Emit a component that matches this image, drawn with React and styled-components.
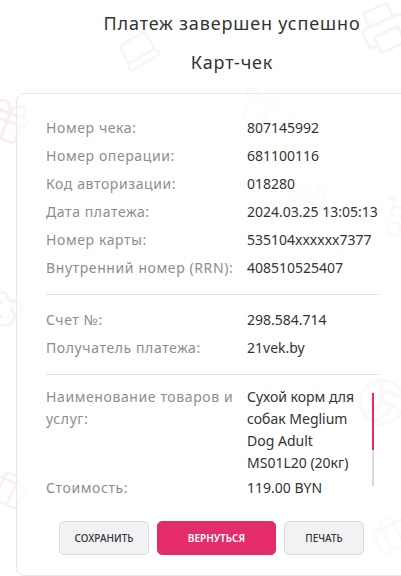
import styled, { createGlobalStyle } from "styled-components";
import { Laptop, Printer, Volleyball, Bike, Gift, Dog, Briefcase, Shirt } from "lucide-react";

const GlobalStyle = createGlobalStyle`
    html, body {
        margin: 0;
        padding: 0;
        background: #fff;
        overflow: hidden;
    }
    body {
        font-family: "Noto Sans", "Open Sans", sans-serif;
        color: #333;
    }
`;

const receipt = [
    { label: "Номер чека:", value: "807145992" },
    { label: "Номер операции:", value: "681100116" },
    { label: "Код авторизации:", value: "018280" },
    { label: "Дата платежа:", value: "2024.03.25 13:05:13" },
    { label: "Номер карты:", value: "535104xxxxxx7377" },
    { label: "Внутренний номер (RRN):", value: "408510525407" },
];

const payee = [
    { label: "Счет №:", value: "298.584.714" },
    { label: "Получатель платежа:", value: "21vek.by" },
];

const marks = [
    { Icon: Laptop, x: 116, y: 28, size: 44, rot: -30, color: "#f6f6f6" },
    { Icon: Printer, x: 358, y: 2, size: 52, rot: -25, color: "#f5f5f5" },
    { Icon: Gift, x: -18, y: 96, size: 50, rot: 20, color: "#f9edf3" },
    { Icon: Bike, x: 374, y: 190, size: 46, rot: -40, color: "#f9f1f5" },
    { Icon: Dog, x: -16, y: 290, size: 40, rot: 30, color: "#f9eef4" },
    { Icon: Volleyball, x: 356, y: 376, size: 52, rot: 0, color: "#f9f1f5" },
    { Icon: Shirt, x: 238, y: 88, size: 40, rot: 25, color: "#f8f8f8" },
    { Icon: Briefcase, x: 372, y: 515, size: 40, rot: -25, color: "#f9f1f5" },
    { Icon: Briefcase, x: -14, y: 470, size: 40, rot: 25, color: "#f9eef4" },
    { Icon: Gift, x: 290, y: 180, size: 42, rot: -20, color: "#f9f9f9" },
    { Icon: Laptop, x: 230, y: 520, size: 40, rot: 10, color: "#f9f9f9" },
];

const App = () => {
    return (
        <Page>
            <GlobalStyle />
            <Watermarks aria-hidden="true">
                {marks.map(({ Icon, x, y, size, rot, color }, i) => (
                    <Mark key={`mark_${i}`} style={{ left: x, top: y, transform: `rotate(${rot}deg)` }}>
                        <Icon size={size} color={color} strokeWidth={1.4} />
                    </Mark>
                ))}
            </Watermarks>
            <Title>Платеж завершен успешно</Title>
            <Subtitle>Карт-чек</Subtitle>
            <Card>
                <InfoList>
                    {receipt.map((item) => (
                        <Row key={item.label}>
                            <Label>{item.label}</Label>
                            <Value>{item.value}</Value>
                        </Row>
                    ))}
                </InfoList>
                <Divider />
                <InfoList>
                    {payee.map((item) => (
                        <Row key={item.label}>
                            <Label>{item.label}</Label>
                            <Value>{item.value}</Value>
                        </Row>
                    ))}
                </InfoList>
                <Divider />
                <ScrollBox>
                    <ScrollContent>
                        <Row $tall>
                            <Label>Наименование товаров и услуг:</Label>
                            <Value>Сухой корм для собак Meglium Dog Adult MS01L20 (20кг)</Value>
                        </Row>
                        <Row $tall>
                            <Label>Стоимость:</Label>
                            <Value>119.00 BYN</Value>
                        </Row>
                    </ScrollContent>
                    <Rail>
                        <Thumb />
                    </Rail>
                </ScrollBox>
                <Actions>
                    <Button type="button" $width="90px">Сохранить</Button>
                    <Button type="button" $width="119px" $primary>Вернуться</Button>
                    <Button type="button" $width="80px">Печать</Button>
                </Actions>
            </Card>
        </Page>
    );
};

const Page = styled.div`
    position: relative;
    width: 464px;
    height: 576px;
    box-sizing: border-box;
    padding: 12px 16px 0;
    display: flex;
    flex-direction: column;
    align-items: center;
`;

const Watermarks = styled.div`
    position: absolute;
    inset: 0;
    pointer-events: none;
    z-index: 0;
`;

const Mark = styled.div`
    position: absolute;
    line-height: 0;
`;

const Title = styled.h1`
    position: relative;
    margin: 0;
    font-size: 18px;
    font-weight: 400;
    line-height: 22px;
    letter-spacing: 0.85px;
    color: #333;
`;

const Subtitle = styled.h2`
    position: relative;
    margin: 17px 0 0;
    font-size: 18px;
    font-weight: 400;
    line-height: 22px;
    letter-spacing: 0.85px;
    color: #333;
`;

const Card = styled.div`
    position: relative;
    align-self: stretch;
    margin-top: 20px;
    box-sizing: border-box;
    padding: 20px 68px 0 29px;
    border: 1px solid #e8e8e8;
    border-radius: 8px;
    background: rgba(255, 255, 255, 0.5);
    height: 540px;
`;

const InfoList = styled.div`
    display: flex;
    flex-direction: column;
`;

const Row = styled.div`
    display: grid;
    grid-template-columns: 201px 1fr;
    font-size: 14px;
    line-height: ${({ $tall }) => ($tall ? "22px" : "28px")};
    margin-bottom: ${({ $tall }) => ($tall ? "3px" : "0")};
`;

const Label = styled.div`
    color: #8d8d8d;
    padding-right: 8px;
    letter-spacing: 0.6px;
`;

const Value = styled.div`
    color: #333;
`;

const Divider = styled.hr`
    margin: 12px 0 11px;
    border: 0;
    border-top: 1px solid #e3e3e3;
`;

const ScrollBox = styled.div`
    display: flex;
    gap: 10px;
    height: 114px;
    margin-top: 6px;
`;

const ScrollContent = styled.div`
    flex: 1;
    overflow: hidden;
`;

const Rail = styled.div`
    width: 2px;
    margin: 7px 5px 14px 0;
    background: #d9d9d9;
    display: flex;
    flex-direction: column;
`;

const Thumb = styled.div`
    height: 57px;
    background: #e42c6a;
`;

const Actions = styled.div`
    display: flex;
    gap: 8px;
    margin: 21px 0 0 13px;
`;

const Button = styled.button`
    width: ${({ $width }) => $width};
    height: 34px;
    padding: 0;
    border: 1px solid ${({ $primary }) => ($primary ? "#e42c6a" : "#dcdcdf")};
    border-radius: 5px;
    background: ${({ $primary }) => ($primary ? "#e42c6a" : "#f2f2f4")};
    color: ${({ $primary }) => ($primary ? "#fff" : "#333")};
    font-family: "Noto Sans", "Open Sans", sans-serif;
    font-size: 10px;
    font-weight: ${({ $primary }) => ($primary ? 600 : 500)};
    text-transform: uppercase;
    cursor: pointer;
`;

export default App;
